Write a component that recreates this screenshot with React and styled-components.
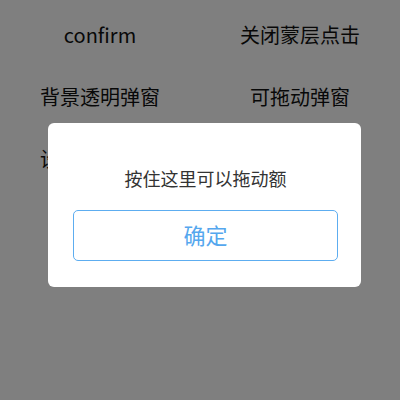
import React from "react";
import styled, { createGlobalStyle } from "styled-components";

const GlobalStyle = createGlobalStyle`
  html, body {
    margin: 0;
    padding: 0;
    width: 400px;
    height: 400px;
    overflow: hidden;
    background: #ffffff;
    font-family: "Noto Sans CJK SC", "Noto Sans", sans-serif;
  }
`;

const Page = styled.div`
  position: relative;
  width: 400px;
  height: 400px;
`;

const ButtonGrid = styled.div`
  display: grid;
  grid-template-columns: 200px 200px;
  grid-auto-rows: 62px;
  padding-top: 4px;
`;

const DemoButton = styled.div`
  display: flex;
  align-items: center;
  justify-content: center;
  font-size: 20px;
  line-height: 28px;
  color: #111;
`;

const Mask = styled.div`
  position: absolute;
  inset: 0;
  background: rgba(0, 0, 0, 0.5);
`;

const Dialog = styled.div`
  position: absolute;
  left: 48px;
  top: 123px;
  width: 313px;
  box-sizing: border-box;
  padding: 43px 23px 26px 25px;
  background: #fff;
  border-radius: 6px;
  display: flex;
  flex-direction: column;
  align-items: stretch;
`;

const DragHandle = styled.div`
  font-size: 18px;
  line-height: 24px;
  color: #333;
  text-align: center;
  margin-bottom: 20px;
`;

const ConfirmButton = styled.div`
  height: 51px;
  box-sizing: border-box;
  border: 1px solid #5dadf0;
  border-radius: 5px;
  display: flex;
  align-items: center;
  justify-content: center;
  padding-bottom: 3px;
  font-size: 22px;
  color: #55a7ee;
`;

const buttons = ["confirm", "关闭蒙层点击", "背景透明弹窗", "可拖动弹窗", "设置弹窗位置", ""];

export default function App() {
  return (
    <>
      <GlobalStyle />
      <Page>
        <ButtonGrid>
          {buttons.map((b, i) => (
            <DemoButton key={i}>{b}</DemoButton>
          ))}
        </ButtonGrid>
        <Mask />
        <Dialog>
          <DragHandle>按住这里可以拖动额</DragHandle>
          <ConfirmButton>确定</ConfirmButton>
        </Dialog>
      </Page>
    </>
  );
}
